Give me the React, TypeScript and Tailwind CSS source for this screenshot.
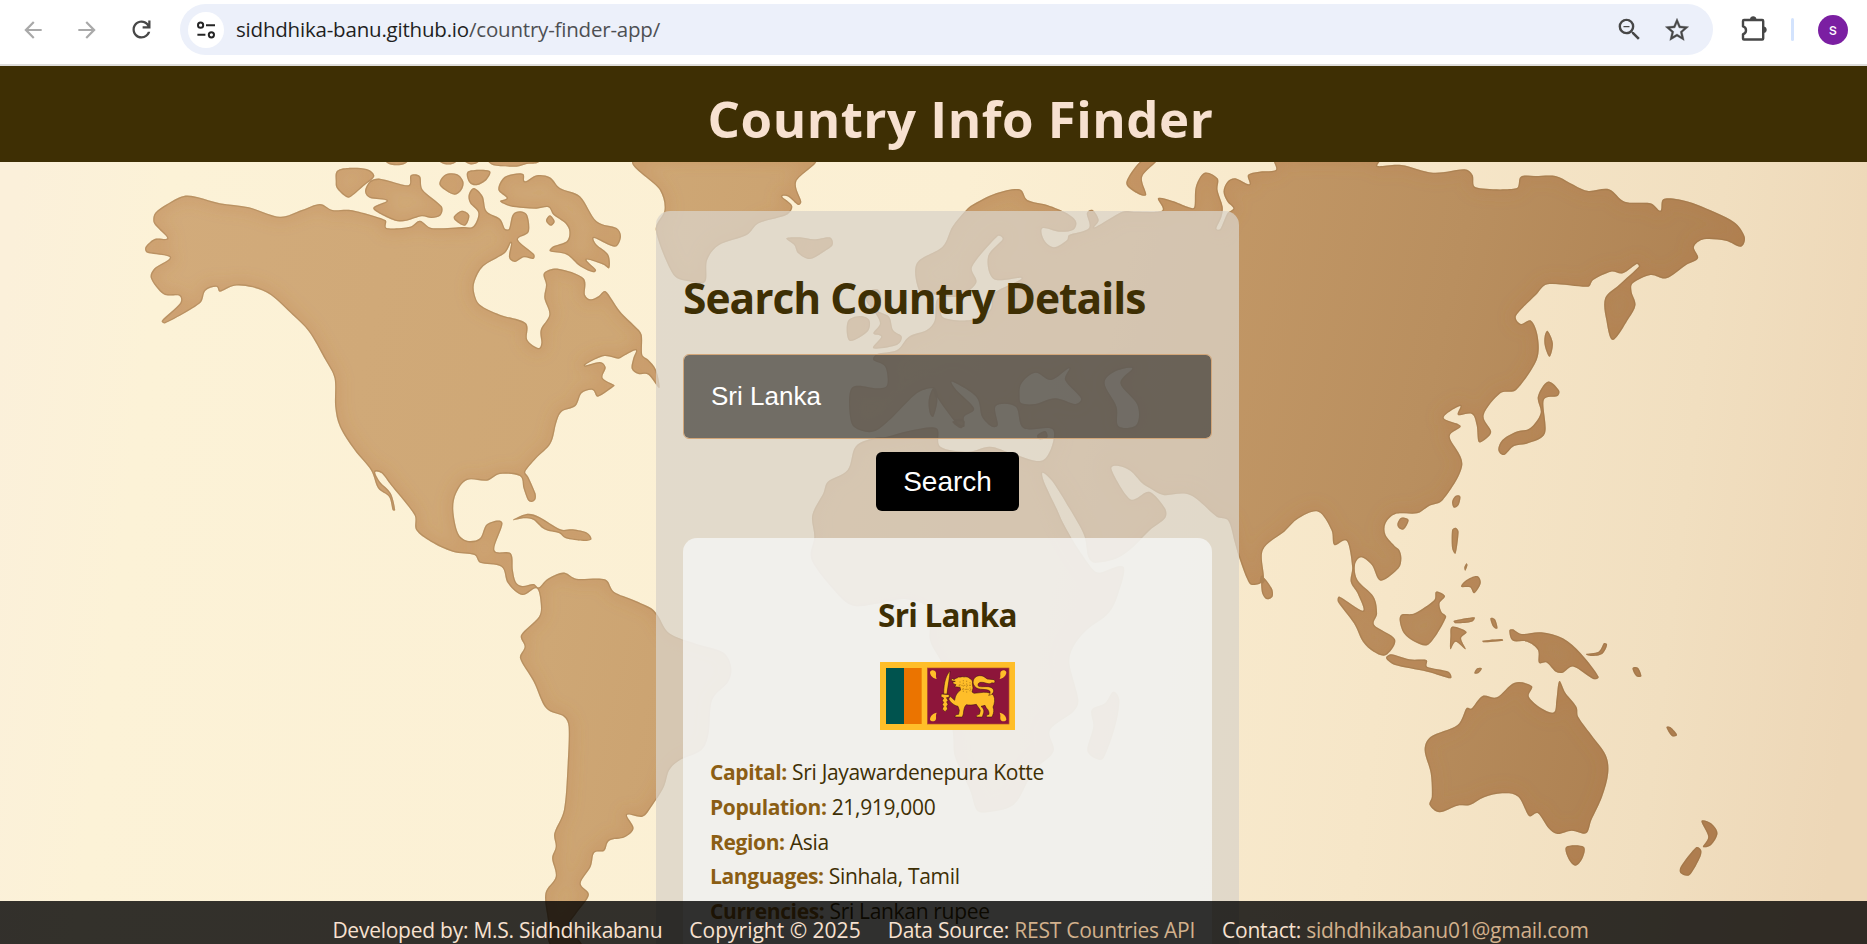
type Frame = [number, number, number, number];
type Segment = [Frame, string];

const ALASKA: Frame = [100, 160, 2.751, 3];
const ARCTIC: Frame = [320, 158, 3, 3];
const ANDES: Frame = [480, 500, 2.8, 3];
const EUROPE: Frame = [640, 150, 2.529, 3];
const SIBERIA: Frame = [1180, 150, 2.529, 3];
const OCEANIA: Frame = [1220, 480, 2.8, 3];
const AFRICA: Frame = [780, 480, 3, 3];

function outline(segments: Segment[]): string {
  const pts: [number, number][] = [];
  for (const [[ox, oy, sx, sy], list] of segments) {
    for (const pair of list.trim().split(/\s+/)) {
      const [x, y] = pair.split(",").map(Number);
      pts.push([ox + x / sx, oy + y / sy]);
    }
  }
  const n = pts.length;
  const f = (v: number) => v.toFixed(1);
  const limit = (dx: number, dy: number, len: number): [number, number] => {
    const m = Math.hypot(dx, dy) || 1;
    const k = Math.min(m, len * 0.36) / m;
    return [dx * k, dy * k];
  };
  let d = `M${f(pts[0][0])} ${f(pts[0][1])}`;
  for (let i = 0; i < n; i++) {
    const p0 = pts[(i - 1 + n) % n];
    const p1 = pts[i];
    const p2 = pts[(i + 1) % n];
    const p3 = pts[(i + 2) % n];
    const len = Math.hypot(p2[0] - p1[0], p2[1] - p1[1]);
    const a = limit((p2[0] - p0[0]) / 6, (p2[1] - p0[1]) / 6, len);
    const b = limit((p3[0] - p1[0]) / 6, (p3[1] - p1[1]) / 6, len);
    d += `C${f(p1[0] + a[0])} ${f(p1[1] + a[1])} ${f(p2[0] - b[0])} ${f(p2[1] - b[1])} ${f(p2[0])} ${f(p2[1])}`;
  }
  return d + "Z";
}

const AMERICAS: Segment[] = [
  [ALASKA, "147,185 152,158 185,132 230,108 270,112 330,130 410,142 495,170 555,150 605,132 640,150 690,150 785,180"],
  [ARCTIC, "200,210 270,206 300,188 335,210 430,207 460,205 475,165 450,135 446,110 462,90 488,115 500,160 540,182 555,212 567,212 578,170 600,160 622,172 626,222 594,245 642,288 640,303 612,298 585,312 567,298 573,255 555,285 490,325 464,370 463,405 480,440 540,470 617,495 622,545 655,570 664,555 662,515 688,470 673,420 678,380 672,345 715,332 790,360 795,410 812,424 835,415 857,400 900,460 945,505 965,530 967,590 985,605 1008,635 1018,690 985,650 955,648 935,632 940,600 947,577 915,592 895,602 850,595 795,622 840,612 857,628 848,660 882,680"],
  [ALASKA, "1415,678 1370,710 1355,690 1325,700 1308,738 1270,755 1255,790 1240,850 1200,895 1170,935 1178,950 1198,1000 1198,1018 1187,1026 1177,1020 1165,985 1155,948 1100,942 1065,962 1010,960 980,1000 972,1050 985,1120 1010,1142 1045,1135 1065,1092 1107,1088 1085,1170 1130,1180"],
  [ANDES, "92,210 100,245 118,258 150,252 165,262 185,240 210,225 238,218 270,236 350,238 375,275 430,300 480,325 500,350 530,400 600,430 680,457 703,500 695,545 650,600 640,700 620,750 560,780 530,810 515,860 480,920 455,950 412,945 430,985 405,1012 362,1022 348,1052 320,1058 310,1100 282,1150 305,1185 270,1240 250,1280 285,1332 300,1390 200,1340 190,1260 183,1180 212,1130 202,1075 212,1040 208,1000 235,930 245,800 248,680 235,650 185,625 150,545 112,475 125,440 115,405 165,350 170,310 158,265 118,285 78,250 60,200 0,188"],
  [ALASKA, "1030,1185 970,1175 910,1145 870,1110 865,1065 800,975 775,940 757,936 770,965 800,1000 812,1050 805,1050 795,1010 765,985 745,930 700,870 660,800 647,740 645,655 620,600 575,515 530,465 470,405 420,382 370,377 330,395 320,380 290,392 275,430 180,490 170,482 220,430 218,407 175,403 140,355 150,325 192,292 130,278 125,262 150,237 185,235 160,205"],
];

const OLD_WORLD: Segment[] = [
  [EUROPE, "825,180 840,165 900,130 960,118 980,150 1030,165 1080,190 1103,215 1095,240 1060,245 1018,235 1022,270 1047,292 1080,270 1085,255 1135,235 1130,190 1145,180 1160,210 1150,232 1220,185 1250,185 1320,182 1310,145 1345,152 1385,170"],
  [SIBERIA, "36,172 40,110 62,68 95,85 95,120 108,170 105,200 92,235 102,237 120,190 135,175 120,155 110,125 120,95 140,85 175,103 172,75 200,65 242,60 240,30 505,30 500,48 560,45 640,68 720,58 740,75 748,112 850,115 862,80 900,78 950,78 985,98 1030,122 1085,118 1125,155 1190,160 1215,182 1222,148 1260,148 1310,165 1400,215 1428,260 1418,290 1380,272 1325,268 1300,290 1310,325 1280,345 1230,385 1190,375 1145,400 1142,425 1152,465 1135,505 1095,570 1078,510 1075,445 1110,405 1160,350 1155,342 1120,370 1090,365 1045,390 1032,410 930,403 900,435 850,497 862,522 888,512 905,560 902,630 850,720 810,730 768,795 787,845 770,870 755,875 750,825 738,792 703,795 708,768 667,803 710,828 682,860 714,945 665,1050 630,1068 600,1090 545,1092 520,1120 520,1155 545,1190"],
  [OCEANIA, "502,210 508,235 500,265 450,302 425,255 395,232 378,255 385,300 430,350 440,400 432,435 490,478 465,525 430,515 400,485 375,430 330,365 335,350 400,392 385,340 366,305 370,260 355,183 320,195 312,150 275,95 220,115 180,155 120,210 122,300 90,315 75,295 53,230"],
  [AFRICA, "1365,190 1345,122 1310,110 1230,45 1150,45 1110,25 1085,8"],
  [EUROPE, "1240,962 1210,948 1192,955 1215,1010 1240,1048"],
  [AFRICA, "1070,55 1110,36 1155,85 1155,115 1110,150 1060,200 1010,235 945,248 925,230 912,165 868,85 818,5 788,-22 792,5 832,90 850,130 890,200 940,270 960,278 1030,260 1015,340 985,400 920,450 880,500 868,550 895,660 880,695 810,750 820,815 760,870 745,900 700,975 620,997 590,990 570,930 525,830 520,770 510,680 490,560 450,480 450,390 380,358 300,370 225,378 180,350 95,240 103,170 97,105 130,40"],
  [EUROPE, "475,995 525,960 545,890 590,865 625,860 690,840 750,835 760,890 830,905 885,890 940,910 1020,930 1045,840 970,835 950,770 900,768 905,825 890,830 865,800 850,740 790,695 800,720 845,775 820,800 820,830 800,820 750,740 740,715 700,730 640,800 600,840 570,845 535,820 535,715 600,715 625,705 620,650 590,630 600,612 650,600 680,560 725,540 745,512 750,450 768,445 765,500 835,510 885,480 895,430 965,385 895,388 880,320 917,268 905,258 840,350 850,400 800,440 730,430 705,420 700,340 765,290 790,230"],
];

const INLAND_SEAS: Segment[][] = [
  [[EUROPE, "960,740 965,700 1000,668 1040,690 1085,655 1075,690 1115,745 1100,762 1050,745 1000,762 965,760"]],
  [[EUROPE, "1175,700 1200,665 1245,655 1215,700 1258,765 1255,825 1210,828 1205,770"]],
];

const inFrame = (frame: Frame, list: string[]): Segment[][] => list.map((s) => [[frame, s]]);

const ISLANDS: Segment[][] = [
  ...inFrame(ARCTIC, [
    "47,70 50,40 80,30 140,33 163,55 130,85 90,118 75,115 50,90",
    "135,100 150,70 180,62 265,82 272,52 300,55 308,95 365,145 362,172 335,180 305,175 260,188 225,188 160,152 200,128 150,120",
    "358,78 375,50 410,48 430,70 425,95 405,110 380,100",
    "445,40 508,38 500,65 470,82 447,72",
    "402,175 425,158 448,172 435,203 405,187",
    "195,5 265,5 255,17 230,22 205,17",
    "355,5 412,5 400,17 375,19",
    "430,5 478,5 470,16 450,19",
    "505,5 662,5 650,16 620,18 590,26 520,22",
    "535,95 550,60 580,48 610,48 615,70 650,52 690,58 720,90 780,115 830,190 890,210 903,235 890,265 865,260 822,240 830,260 865,290 868,330 850,320 800,305 828,335 820,343 780,325 740,290 690,280 700,265 740,250 748,220 735,195 700,170 685,148 650,152 610,150 570,145 540,130 560,120",
    "678,188 690,172 704,190 692,203",
  ]),
  ...inFrame(ANDES, ["92,60 130,42 165,50 225,88 260,88 300,98 312,118 290,123 240,115 222,100 180,88 150,60 125,55"]),
  ...inFrame(EUROPE, [
    "-12,30 50,120 62,180 40,240 85,375 130,395 165,395 170,330 200,285 270,255 300,220 370,195 385,168 360,140 375,140 400,165 408,155 395,95 440,30",
    "370,265 405,262 440,268 480,262 487,285 465,305 430,327 400,310 390,285",
    "525,515 555,498 580,510 575,545 530,572",
    "570,430 600,418 610,445 600,480 630,500 640,540 662,560 650,585 590,595 610,560 590,550 607,520 590,480 575,460",
    "730,750 742,715 752,750 742,800 733,790",
    "790,815 820,812 812,835",
    "1005,855 1025,843 1030,862 1010,868",
    "1230,95 1270,30 1308,30 1270,80 1280,135 1250,125",
  ]),
  ...inFrame(AFRICA, ["935,690 975,670 1000,635 1018,660 1005,740 970,835 945,835 922,810 940,740"]),
  ...inFrame(SIBERIA, [
    "922,560 930,543 943,580 935,620 923,590",
    "905,740 930,695 958,720 955,738 920,750 923,850 880,880 845,888 820,915 805,900 815,870 850,845 885,835 912,790",
  ]),
  ...inFrame(OCEANIA, [
    "118,290 145,325 147,350 130,357 117,335",
    "650,65 660,47 673,50 668,75 655,83",
    "497,130 508,113 528,120 515,148 500,143",
    "650,150 660,143 668,155 660,220 650,205",
    "684,262 690,250 693,256 687,272",
    "675,320 690,300 720,288 730,310 712,340 700,322",
    "503,420 510,403 545,400 600,360 605,335 630,348 615,370 620,395 633,412 585,493 545,485 515,460",
    "655,422 712,412 705,425 660,430",
    "650,440 690,455 675,475 688,508 660,485 645,508 645,470",
    "757,415 770,418 777,445 765,440",
    "735,482 790,477 792,482 738,487",
    "465,535 480,523 530,538 578,540 580,560 640,575 645,595 580,575 490,555",
    "712,580 720,565 733,565 725,578",
    "810,452 820,448 845,462 900,457 960,475 1010,520 1060,590 1045,597 990,560 960,578 940,575 915,548 893,548 890,510 860,485 820,482",
    "1025,522 1060,515 1075,490 1084,495 1070,522 1040,528",
    "1155,565 1170,563 1180,588 1165,588",
    "1250,742 1262,742 1280,765 1265,768",
    "573,810 590,770 665,735 690,685 705,685 735,648 775,652 825,608 873,618 865,650 900,685 935,697 942,660 950,603 968,640 998,680 1003,710 1040,765 1080,825 1087,880 1070,950 1040,1020 1025,1060 985,1052 945,1062 920,1045 890,1000 865,1008 835,950 790,940 740,952 700,975 665,977 615,997 587,975 593,950 590,880",
    "970,1100 1018,1100 1015,1135 995,1157 975,1135",
    "1348,1023 1375,1030 1393,1060 1375,1095 1352,1100 1367,1070",
    "1333,1102 1347,1110 1345,1130 1315,1185 1290,1180 1290,1160",
  ]),
];

const OLD_WORLD_PATH = [outline(OLD_WORLD), ...INLAND_SEAS.map(outline)].join("");
const OTHER_LAND_PATH = [outline(AMERICAS), ...ISLANDS.map(outline)].join("");

function WorldMap() {
  return (
    <svg className="absolute inset-0 h-full w-full" viewBox="0 162 1867 782" preserveAspectRatio="none" aria-hidden="true">
      <defs>
        <linearGradient id="sea" gradientUnits="userSpaceOnUse" x1="0" y1="330" x2="1867" y2="560">
          <stop offset="0" stopColor="#fbf0da" />
          <stop offset="0.08" stopColor="#fcf2d7" />
          <stop offset="0.5" stopColor="#fbefd3" />
          <stop offset="0.75" stopColor="#f6e6c8" />
          <stop offset="0.9" stopColor="#f1dfc0" />
          <stop offset="1" stopColor="#edd7b7" />
        </linearGradient>
        <linearGradient id="land" gradientUnits="userSpaceOnUse" x1="150" y1="200" x2="1720" y2="560">
          <stop offset="0" stopColor="#d2ab7b" />
          <stop offset="0.3" stopColor="#cea775" />
          <stop offset="0.6" stopColor="#c59a68" />
          <stop offset="0.8" stopColor="#b98f5f" />
          <stop offset="1" stopColor="#ac7f50" />
        </linearGradient>
        <clipPath id="coast">
          <path d={OLD_WORLD_PATH} clipRule="evenodd" />
          <path d={OTHER_LAND_PATH} />
        </clipPath>
        <filter id="soft" x="-5%" y="-5%" width="110%" height="110%">
          <feGaussianBlur stdDeviation="7" />
        </filter>
      </defs>
      <rect x="0" y="162" width="1867" height="782" fill="url(#sea)" />
      <path d={OLD_WORLD_PATH} fill="url(#land)" fillRule="evenodd" />
      <path d={OTHER_LAND_PATH} fill="url(#land)" />
      <g clipPath="url(#coast)" fill="none">
        <path d={OLD_WORLD_PATH + OTHER_LAND_PATH} stroke="#b9713f" strokeWidth="12" strokeOpacity="0.2" filter="url(#soft)" />
        <path d={OLD_WORLD_PATH + OTHER_LAND_PATH} stroke="#8f6c42" strokeWidth="2.6" strokeOpacity="0.32" />
      </g>
    </svg>
  );
}

function BrowserBar() {
  return (
    <div className="flex h-[66px] shrink-0 items-start border-b-2 border-[#dedddb] bg-white pt-1">
      <div className="flex h-[51px] w-[180px] shrink-0 items-center pl-[20px]">
        <svg className="h-[26px] w-[26px]" viewBox="0 0 24 24" fill="#a9a9a9">
          <path d="M20 11H7.83l5.59-5.59L12 4l-8 8 8 8 1.41-1.41L7.83 13H20v-2z" />
        </svg>
        <svg className="ml-[28px] h-[26px] w-[26px]" viewBox="0 0 24 24" fill="#a9a9a9">
          <path d="M12 4l-1.41 1.41L16.17 11H4v2h12.17l-5.58 5.59L12 20l8-8z" />
        </svg>
        <svg className="ml-[28px] h-[27px] w-[27px]" viewBox="0 0 24 24" fill="#474747">
          <path d="M12 20c-2.23 0-4.13-.78-5.68-2.32C4.78 16.13 4 14.23 4 12s.78-4.13 2.32-5.68C7.87 4.78 9.77 4 12 4c1.15 0 2.25.24 3.3.71 1.05.48 1.95 1.16 2.7 2.04V4h2v7h-7V9h4.2c-.53-.93-1.26-1.67-2.19-2.2C14.09 6.27 13.08 6 12 6c-1.67 0-3.08.58-4.25 1.75S6 10.33 6 12s.58 3.08 1.75 4.25S10.33 18 12 18c1.28 0 2.44-.37 3.48-1.1s1.76-1.7 2.17-2.9h2.1c-.47 1.77-1.42 3.21-2.85 4.33S13.83 20 12 20z" />
        </svg>
      </div>
      <div className="flex h-[51px] w-[1533px] shrink-0 items-center rounded-full bg-[#ecf0fa] pr-[22px] pl-[8px]">
        <div className="flex h-9 w-9 items-center justify-center rounded-full bg-white">
          <svg className="h-5 w-5" viewBox="0 0 20 20" fill="none" stroke="#242424" strokeWidth="2">
            <circle cx="4.6" cy="5.2" r="2.6" />
            <path d="M10 5.2h9M1.4 14.800h8" />
            <circle cx="15.4" cy="14.8" r="2.6" />
          </svg>
        </div>
        <span className="ml-[12px] text-[20.5px] tracking-[-0.2px] text-[#1f1f1f]">
          sidhdhika-banu.github.io<span className="text-[#4d4f53]">/country-finder-app/</span>
        </span>
        <svg className="ml-auto h-[29px] w-[29px]" viewBox="0 0 24 24" fill="#474747">
          <path d="M15.5 14h-.79l-.28-.27A6.471 6.471 0 0 0 16 9.5 6.5 6.5 0 1 0 9.5 16c1.61 0 3.09-.59 4.23-1.57l.27.28v.79l5 4.99L20.49 19l-4.99-5zm-6 0C7.01 14 5 11.99 5 9.5S7.01 5 9.500 5 14 7.010 14 9.500 11.990 14 9.500 14zM7 9h5v1.200H7z" />
        </svg>
        <svg className="ml-[19px] h-[28px] w-[28px]" viewBox="0 0 24 24" fill="#474747" stroke="#474747" strokeWidth="0.3">
          <path d="M22 9.240l-7.190-.620L12 2 9.190 8.630 2 9.240l5.460 4.730L5.820 21 12 17.270 18.180 21l-1.630-7.030L22 9.240zM12 15.400l-3.760 2.270 1-4.280-3.320-2.880 4.380-.380L12 6.100l1.710 4.040 4.380.380-3.320 2.880 1 4.280L12 15.400z" />
        </svg>
      </div>
      <div className="flex h-[51px] grow items-center pl-[28px]">
        <svg className="mb-[3px] h-[26px] w-[26px]" viewBox="0 0 26 26" fill="none">
          <path
            d="M3 5h18.200a1 1 0 0 1 1 1v17.500a1 1 0 0 1-1 1H3a1 1 0 0 1-1-1v-4.300c1.800-.4 3-1.800 3-3.900s-1.200-3.500-3-3.900V6a1 1 0 0 1 1-1z"
            stroke="#474747"
            strokeWidth="2.4"
            strokeLinejoin="round"
          />
          <path d="M9.200 4.600a3 3 0 0 1 6 0zM22.400 11.800a3 3 0 0 1 0 6z" fill="#474747" stroke="#474747" strokeWidth="0.600" />
        </svg>
        <span className="ml-[24px] h-[23px] w-[3px] rounded-sm bg-[#d3e3fd]" />
        <span className="ml-[24px] flex h-[30px] w-[30px] items-center justify-center rounded-full bg-[#7b1fa2] font-[Roboto,sans-serif] text-[16px] leading-none text-white">
          s
        </span>
      </div>
    </div>
  );
}

function Flag() {
  return (
    <svg className="mx-auto mt-[26px] h-[68px] w-[135px]" viewBox="0 0 405 204" role="img" aria-label="Flag of Sri Lanka">
      <rect width="405" height="204" fill="#ffbe29" />
      <rect x="18" y="18" width="54" height="168" fill="#00534e" />
      <rect x="72" y="18" width="53" height="168" fill="#eb7400" />
      <rect x="142" y="18" width="245" height="168" fill="#8d153a" stroke="#b5502f" strokeWidth="2" />
      <g fill="#ffbe29">
        <path d="M150 30c4-8 17-6 18 3 1 6-2 9 2 18-9-2-20-8-20-21z" />
        <path d="M379 30c-4-8-17-6-18 3-1 6 2 9-2 18 9-2 20-8 20-21z" />
        <path d="M150 173c4 8 17 6 18-3 1-6-2-9 2-18-9 2-20 8-20 21z" />
        <path d="M379 173c-4 8-17 6-18-3-1-6 2-9-2-18 9 2 20 8 20 21z" />
      </g>
      <g fill="#ffbe29" stroke="#2c0b10" strokeWidth="1.500" strokeLinejoin="round">
        <path d="M210 28c-10 8-19 32-19 68h10c3-28 8-48 9-68z" />
        <path d="M184 96l24 2-1 8-8 1 5 8-4 5 4 7-4 6 3 8-8 8-8-8 4-8-4-5 4-7-4-5 4-8-8-4z" />
        <path d="M214 56c0-8 4-7 8-3 4-5 10-4 14-8 6 2 10-3 16 0 8-2 14 1 18 5 8 3 8 10 7 16l2 12-3 12 6 4 28-3c14-1 26 3 31 10 5 10 3 24-2 34 4 10 2 18-1 25l-2 5h-17c-1-6 4-7 8-8 1-8-3-15-8-19l-4-8-12 3c10 8 10 16 6 25l-2 7h-18c-1-5 4-7 9-8l3-11c-2-7-8-12-12-19-14 3-22 2-30 1-6 5-8 16-9 28l-3 9h-22c-1-5 4-8 11-8l2-12-4-12c-12-2-24-13-28-22l4-8c6 3 8 8 14 12 2-16 8-24 18-31l-2-8-16-2 4-6-8-3-2-5 8-2z" />
        <path d="M280 66c-3-14 6-24 18-25 12-1 16 5 24 10l20 2c6 6 2 12-6 9-10 8-20-2-32-1-10 0-12 8-8 12 12 4 28-3 40 5 10 7 4 20-10 22 6-8 6-12 0-15-12-6-38 3-46-19z" />
      </g>
      <path d="M240 58v30M250 54v40M260 56v38M270 60v32M236 70h38M238 82h36" stroke="#8a5a10" strokeWidth="1.500" strokeDasharray="4 4" />
    </svg>
  );
}

const DETAILS = [
  { label: "Capital:", value: "Sri Jayawardenepura Kotte" },
  { label: "Population:", value: "21,919,000" },
  { label: "Region:", value: "Asia" },
  { label: "Languages:", value: "Sinhala, Tamil" },
  { label: "Currencies:", value: "Sri Lankan rupee" },
];

export default function App() {
  return (
    <div className="relative flex h-[944px] w-full flex-col overflow-hidden font-['Open_Sans',sans-serif]">
      <BrowserBar />
      <header className="flex h-24 shrink-0 items-center justify-center bg-[#3e2f04] pt-[7px] pl-[54px]">
        <h1 className="text-[51px] leading-[60px] font-bold tracking-[0.5px] text-[#f7e1d0]">Country Info Finder</h1>
      </header>
      <main className="relative flex h-[782px] shrink-0 justify-center overflow-hidden pt-[49px] pl-7">
        <WorldMap />
        <section className="relative flex h-[900px] w-[583px] flex-col rounded-[14px] bg-[rgba(217,211,200,0.75)] px-[27px] pt-[59px]">
          <h2 className="text-[42.5px] leading-[56px] font-bold tracking-[-1px] whitespace-nowrap text-[#3e2f04]">
            Search Country Details
          </h2>
          <input
            type="text"
            defaultValue="Sri Lanka"
            className="mt-[28px] h-[85px] w-full shrink-0 rounded-[6px] border border-[#d2a679] bg-black/50 bg-clip-padding px-[27px] font-['Liberation_Sans',sans-serif] text-[26px] text-white outline-none"
          />
          <button
            type="button"
            className="mx-auto mt-[13px] h-[59px] w-[143px] shrink-0 rounded-[6px] bg-black font-['Liberation_Sans',sans-serif] text-[28px] text-white"
          >
            Search
          </button>
          <article className="mt-[27px] flex grow flex-col rounded-[14px] bg-[rgba(245,245,244,0.8)] px-[27px] pt-[56px]">
            <h3 className="text-center text-[31.5px] leading-[42px] font-bold tracking-[-0.75px] text-[#3e2f04]">Sri Lanka</h3>
            <Flag />
            <div className="mt-[25px] text-[21px] leading-[34.8px] tracking-[-0.32px] text-[#3e2f04]">
              {DETAILS.map(({ label, value }) => (
                <p key={label}>
                  <strong className="font-bold tracking-[-0.38px] text-[#8b5e14]">{label}</strong> {value}
                </p>
              ))}
            </div>
          </article>
        </section>
      </main>
      <footer className="absolute inset-x-0 bottom-0 flex h-[43px] justify-center gap-[27px] bg-black/80 pt-[14px] pl-[54px] text-[21px] leading-[30px] tracking-[-0.25px] whitespace-nowrap text-[#f7e1d0]">
        <span>Developed by: M.S. Sidhdhikabanu</span>
        <span className="tracking-normal">Copyright © 2025</span>
        <span>
          Data Source: <a className="text-[#d2b08c]">REST Countries API</a>
        </span>
        <span>
          Contact: <a className="text-[#d2b08c]">sidhdhikabanu01@gmail.com</a>
        </span>
      </footer>
    </div>
  );
}
